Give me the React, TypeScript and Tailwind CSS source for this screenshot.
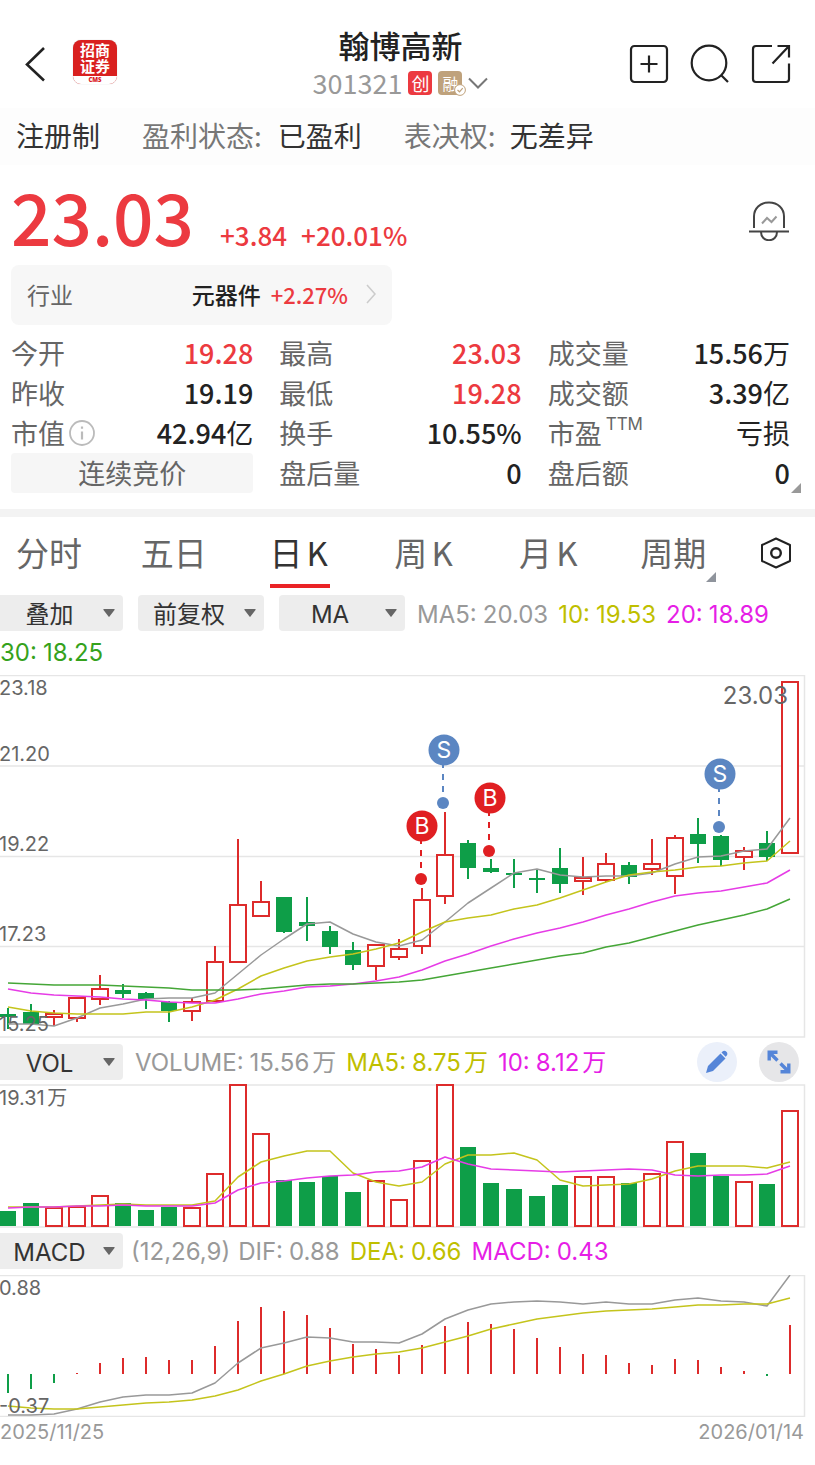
import { useState } from 'react';
import clsx from 'clsx';

const STEP = 23;
const FIRST = 8;
const cx = (i: number) => FIRST + i * STEP;

// [up, high, bodyTop, bodyBottom, low]
const candles: [number, number, number, number, number][] = [
    [0, 333, 339, 342, 354], [0, 329, 337, 349, 350], [1, 335, 339, 342, 351], [1, 323, 323, 343, 347],
    [1, 300, 314, 324, 330], [0, 309, 315, 319, 323], [0, 317, 318, 324, 334], [0, 326, 327, 336, 347],
    [1, 323, 327, 336, 346], [1, 271, 287, 326, 326], [1, 164, 230, 287, 287], [1, 206, 227, 241, 241],
    [0, 222, 222, 257, 258], [0, 222, 247, 251, 266], [0, 251, 256, 272, 279], [0, 267, 275, 290, 295],
    [1, 269, 270, 291, 305], [1, 264, 274, 282, 285], [1, 213, 225, 271, 279], [1, 137, 180, 221, 229],
    [0, 165, 168, 193, 204], [0, 184, 193, 197, 198], [0, 184, 198, 200, 213], [0, 194, 203, 205, 218],
    [0, 173, 193, 209, 218], [1, 182, 203, 206, 220], [1, 178, 189, 205, 207], [0, 187, 190, 202, 209],
    [1, 164, 189, 194, 200], [1, 160, 163, 201, 219], [0, 143, 159, 169, 188], [0, 160, 161, 185, 191],
    [1, 172, 176, 182, 195], [0, 156, 168, 182, 186], [1, 7, 7, 178, 178],
];

const ma5 = [349, 349, 351, 343, 333, 329, 324, 323, 323, 318, 299, 280, 264, 249, 247, 259, 267, 271, 265, 247, 228, 213, 198, 194, 200, 202, 201, 201, 198, 189, 182, 181, 176, 174, 143];
const ma10 = [332, 336, 338, 339, 339, 339, 337, 337, 332, 325, 314, 301, 293, 286, 282, 279, 274, 268, 257, 247, 243, 240, 234, 230, 223, 215, 207, 200, 197, 195, 192, 191, 188, 186, 166];
const ma20 = [314, 318, 320, 321, 322, 324, 325, 327, 328, 328, 324, 319, 316, 312, 311, 309, 306, 302, 295, 286, 279, 271, 264, 258, 253, 247, 240, 234, 227, 221, 218, 216, 212, 208, 195];
const ma30 = [308, 309, 310, 310, 310, 311, 312, 313, 315, 315, 315, 314, 312, 310, 309, 309, 308, 307, 305, 301, 297, 293, 289, 285, 281, 278, 272, 268, 262, 256, 250, 245, 240, 234, 224];

const volumes = [126, 118, 123, 122, 111, 118, 125, 122, 123, 89, 0, 49, 95, 97, 91, 107, 96, 115, 76, 0, 62, 98, 104, 111, 100, 92, 92, 98, 89, 57, 68, 91, 97, 99, 26];
const volMa5 = [122, 122, 122, 121, 120, 119, 120, 120, 120, 116, 92, 77, 71, 66, 66, 88, 97, 101, 97, 79, 70, 70, 68, 75, 95, 101, 100, 99, 94, 86, 81, 81, 81, 83, 77];
const volMa10 = [123, 122, 122, 121, 121, 120, 121, 121, 121, 118, 105, 98, 96, 93, 91, 90, 87, 86, 82, 72, 79, 84, 85, 86, 87, 86, 85, 84, 85, 90, 91, 90, 90, 89, 81];

const ZERO = 99;
const macd = [118, 114, 108, 98, 88, 83, 82, 85, 85, 71, 46, 32, 36, 40, 53, 69, 74, 80, 70, 51, 47, 49, 54, 63, 72, 79, 80, 88, 90, 84, 85, 92, 96, 101, 50];
const dif = [140, 140, 139, 134, 127, 122, 120, 120, 118, 108, 88, 73, 68, 62, 63, 67, 67, 68, 59, 44, 35, 29, 27, 26, 27, 29, 27, 29, 29, 25, 23, 26, 27, 31, 0];
const dea = [131, 133, 134, 134, 132, 130, 128, 127, 125, 121, 115, 106, 99, 91, 86, 82, 79, 77, 73, 67, 61, 54, 49, 44, 41, 38, 36, 35, 34, 32, 30, 30, 29, 29, 23];

const trades = [
    { type: 'B', x: 422, y: 151 },
    { type: 'S', x: 444, y: 75 },
    { type: 'B', x: 490, y: 123 },
    { type: 'S', x: 720, y: 99 },
];

const RED = '#dd2b2b';
const GREEN = '#0e9e48';

const quotes = [
    { label: '今开', value: '19.28', up: true },
    { label: '最高', value: '23.03', up: true },
    { label: '成交量', value: '15.56', unit: '万' },
    { label: '昨收', value: '19.19' },
    { label: '最低', value: '19.28', up: true },
    { label: '成交额', value: '3.39', unit: '亿' },
    { label: '市值', value: '42.94', unit: '亿', info: true },
    { label: '换手', value: '10.55%' },
    { label: '市盈', unit: '亏损', sup: 'TTM' },
    { label: '连续竞价', phase: true },
    { label: '盘后量', value: '0' },
    { label: '盘后额', value: '0' },
];

const tabs = ['分时', '五日', '日K', '周K', '月K', '周期'];

function Line({ data, color }: { data: number[]; color: string }) {
    return (
        <polyline
            points={data.map((y, i) => `${cx(i)},${y}`).join(' ')}
            fill="none"
            stroke={color}
            strokeWidth="1.5"
            strokeLinejoin="round"
        />
    );
}

function Bar({ i, up, top, bottom }: { i: number; up: boolean; top: number; bottom: number }) {
    return up ? (
        <rect x={cx(i) - 8} y={top} width="16" height={Math.max(bottom - top, 1)} fill="#fff" stroke={RED} strokeWidth="2" />
    ) : (
        <rect x={cx(i) - 8} y={top} width="16" height={bottom - top} fill={GREEN} />
    );
}

function AxisText({ y, children }: { y: number; children: string }) {
    return <text x="-1" y={y} fontSize="20" fill="#666">{children}</text>;
}

function Legend({ name, value, color }: { name: string; value: string; color: string }) {
    return (
        <span className={clsx('flex gap-1.5 whitespace-nowrap pt-0.5', color)}>
            <span>{name}:</span>
            <span>{value}</span>
        </span>
    );
}

function Picker({ label, value, first }: { label: string; value: string; first?: boolean }) {
    return (
        <div className="relative">
            <select
                aria-label={label}
                className={clsx(
                    'h-9 appearance-none bg-[#ededed] pr-6 pt-0.5 text-center text-2xl leading-9 text-[#333]',
                    first ? 'w-[123px] rounded-r' : 'w-[126px] rounded'
                )}
            >
                <option>{value}</option>
            </select>
            <svg className="pointer-events-none absolute right-2 top-3.5 h-2 w-3" viewBox="0 0 12 8">
                <path d="M1 0h10a.6.6 0 0 1 .5 1L6.5 7.6a.6.6 0 0 1-1 0L.5 1A.6.6 0 0 1 1 0z" fill="#666" />
            </svg>
        </div>
    );
}

function Header() {
    return (
        <header className="flex h-[108px] items-center justify-between pl-6 pr-6 pt-5">
            <div className="flex w-[148px] items-center gap-[27px]">
                <button aria-label="返回">
                    <svg className="h-10 w-[22px]" viewBox="0 0 22 40" fill="none" stroke="#222" strokeWidth="2.6">
                        <path d="M20 4L3 20.500l17 16" />
                    </svg>
                </button>
                <div className="mb-1 flex h-11 w-11 flex-col items-center overflow-hidden rounded-lg bg-[#d9201f] pt-0.5 text-[15px] font-bold leading-4 text-white shadow-[0_0_1px_#bbb]">
                    <span>招商</span>
                    <span>证券</span>
                    <span className="mt-0.5 w-full flex-1 rounded-t-[50%/2px] bg-white text-center font-['Open_Sans',sans-serif] text-[6px] font-extrabold leading-[8px] text-[#d9201f]">
                        CMS
                    </span>
                </div>
            </div>
            <div className="flex flex-col items-center">
                <h1 className="mb-1.5 text-[31px] font-medium leading-8 text-[#222]">翰博高新</h1>
                <div className="flex h-8 items-center gap-1.5">
                    <span className="text-[27px] leading-8 text-[#999]">301321</span>
                    <span className="flex h-6 w-6 items-center justify-center rounded bg-[#ec3a40] text-[18px] leading-6 text-white">创</span>
                    <span className="relative flex h-6 w-6 items-center justify-center rounded bg-[#bfa27c] text-[16px] leading-6 text-white">
                        融
                        <svg className="absolute -bottom-px -right-1 h-3 w-3" viewBox="0 0 12 12">
                            <circle cx="6" cy="6" r="5.400" fill="#fff" stroke="#bfa27c" />
                            <path d="M3.500 6l2 1.800 3.200-3.600" fill="none" stroke="#bfa27c" strokeWidth="1.200" />
                        </svg>
                    </span>
                    <button aria-label="切换股票">
                        <svg className="h-3 w-5" viewBox="0 0 20 12" fill="none" stroke="#777" strokeWidth="2">
                            <path d="M1 1.500l9 9 9-9" />
                        </svg>
                    </button>
                </div>
            </div>
            <div className="flex w-[162px] items-center justify-between text-[#222]">
                <button aria-label="添加自选">
                    <svg className="h-10 w-10" viewBox="0 0 40 40" fill="none" stroke="currentColor" strokeWidth="2.200">
                        <rect x="2" y="2" width="36" height="36" rx="3.500" />
                        <path d="M20 11.500v17M11.500 20h17" />
                    </svg>
                </button>
                <button aria-label="搜索">
                    <svg className="h-10 w-10" viewBox="0 0 40 40" fill="none" stroke="currentColor" strokeWidth="2.200">
                        <circle cx="19" cy="19" r="17.300" />
                        <path d="M31 31l7 7" />
                    </svg>
                </button>
                <button aria-label="分享">
                    <svg className="h-10 w-10" viewBox="0 0 40 40" fill="none" stroke="currentColor" strokeWidth="2.200">
                        <path d="M21 2H5a3 3 0 0 0-3 3v30a3 3 0 0 0 3 3h30a3 3 0 0 0 3-3V19.500" />
                        <path d="M26.500 2H38v11.500M38 2L21.500 19.500" />
                    </svg>
                </button>
            </div>
        </header>
    );
}

function Summary() {
    return (
        <section className="px-[11px]">
            <div className="flex h-[100px] items-end justify-between pb-3.5 pr-[15px]">
                <div className="flex items-baseline text-[#ec3a40]">
                    <span className="text-[71px] font-medium leading-none">23.03</span>
                    <span className="ml-[26px] text-[26px] font-medium leading-none">+3.84</span>
                    <span className="ml-3.5 text-[26px] font-medium leading-none">+20.01%</span>
                </div>
                <button aria-label="股价提醒" className="mb-2.5">
                    <svg className="h-10 w-10" viewBox="0 0 40 40" fill="none" stroke="#444" strokeWidth="2">
                        <path d="M5 27V15.500C5 7.500 11 1.500 20 1.500S35 7.500 35 15.500V27" />
                        <path d="M0 30.500h40M12 31c0 5 3.500 8.200 8 8.200s8-3.200 8-8.200" />
                        <path d="M13 22.500l5-5.500 4.500 4 5-5.500" stroke="#999" />
                    </svg>
                </button>
            </div>
            <a href="#industry" className="flex h-[60px] w-[381px] items-center rounded-lg bg-[#f7f7f7] px-4 pb-0.5 text-[23px]">
                <span className="text-[#666]">行业</span>
                <span className="ml-auto font-medium text-[#222]">元器件</span>
                <span className="ml-2.5 text-[22px] font-medium text-[#ec3a40]">+2.27%</span>
                <svg className="ml-[18px] h-5 w-2.5" viewBox="0 0 10 20" fill="none" stroke="#ccc" strokeWidth="1.600">
                    <path d="M1 1l8 9-8 9" />
                </svg>
            </a>
        </section>
    );
}

function Quotes() {
    return (
        <section className="relative grid grid-cols-3 gap-x-[26px] border-b-8 border-[#f3f3f3] pb-4 pl-[11px] pr-[25px] pt-2 text-[27px]">
            {quotes.map((q) =>
                q.phase ? (
                    <div key={q.label} className="h-10 rounded bg-[#f6f6f6] text-center leading-10 text-[#666]">{q.label}</div>
                ) : (
                    <div key={q.label} className="flex h-10 items-center justify-between leading-10">
                        <span className="flex items-center text-[#666]">
                            {q.label}
                            {q.info && (
                                <svg className="ml-1 h-[26px] w-[26px]" viewBox="0 0 26 26" fill="none" stroke="#bbb" strokeWidth="1.800">
                                    <circle cx="13" cy="13" r="12" />
                                    <path d="M13 11.500v8M13 6.500v2.200" strokeWidth="2.200" />
                                </svg>
                            )}
                            {q.sup && <sup className="ml-1 font-['Inter',sans-serif] text-[17px] leading-none text-[#666]">{q.sup}</sup>}
                        </span>
                        <span className={clsx('font-medium', q.up ? 'text-[#ec3a40]' : 'text-[#222]')}>
                            {q.value}
                            {q.unit && <span className="font-normal">{q.unit}</span>}
                        </span>
                    </div>
                )
            )}
            <svg className="absolute bottom-4 right-3.5 h-2.5 w-2.5" viewBox="0 0 10 10">
                <path d="M10 0v10H0z" fill="#999" />
            </svg>
        </section>
    );
}

function PriceChart() {
    return (
        <svg className="block h-auto w-full" viewBox="0 0 815 363" fontFamily="Inter, 'Noto Sans CJK SC', sans-serif">
            <path d="M0 .5H804.500V362H0M0 91H804M0 181.500H804M0 271.500H804" fill="none" stroke="#e6e6e6" strokeWidth="1.500" />
            {candles.map(([up, high, top, bottom, low], i) => (
                <g key={i}>
                    <line x1={cx(i)} x2={cx(i)} y1={high} y2={low} stroke={up ? RED : GREEN} strokeWidth="2" />
                    <Bar i={i} up={up === 1} top={top} bottom={bottom} />
                </g>
            ))}
            <Line data={ma5} color="#999" />
            <Line data={ma10} color="#c4c41c" />
            <Line data={ma20} color="#e63ce6" />
            <Line data={ma30} color="#45a637" />
            <AxisText y={20}>23.18</AxisText>
            <AxisText y={86}>21.20</AxisText>
            <AxisText y={176}>19.22</AxisText>
            <AxisText y={266}>17.23</AxisText>
            <AxisText y={356}>15.25</AxisText>
            <text x="788" y="29" fontSize="24" fill="#666" textAnchor="end">23.03</text>
            {trades.map(({ type, x, y }) => {
                const color = type === 'B' ? '#e01f22' : '#5b86c2';
                return (
                    <g key={x}>
                        <line x1={x - 1} x2={x - 1} y1={y + 12} y2={y + 42} stroke={color} strokeWidth="2" strokeDasharray="6 6" />
                        <circle cx={x} cy={y} r="15.500" fill={color} />
                        <text x={x} y={y + 8} fontSize="23" fill="#fff" textAnchor="middle">{type}</text>
                        <circle cx={x - 1} cy={y + 53} r="6" fill={color} />
                    </g>
                );
            })}
        </svg>
    );
}

function VolumeChart() {
    return (
        <svg className="block h-auto w-full overflow-visible" viewBox="0 0 815 142" fontFamily="Inter, 'Noto Sans CJK SC', sans-serif">
            <path d="M0 0H804.500V142H0" fill="none" stroke="#e6e6e6" strokeWidth="1.500" />
            {volumes.map((top, i) => (
                <Bar key={i} i={i} up={candles[i][0] === 1} top={top} bottom={141} />
            ))}
            <Line data={volMa5} color="#c4c41c" />
            <Line data={volMa10} color="#e63ce6" />
            <AxisText y={20}>19.31万</AxisText>
        </svg>
    );
}

function MacdChart() {
    return (
        <svg className="block h-auto w-full" viewBox="0 0 815 142" fontFamily="Inter, 'Noto Sans CJK SC', sans-serif">
            <path d="M0 .5H804.500V141.500H0" fill="none" stroke="#e6e6e6" strokeWidth="1.500" />
            {macd.map((y, i) => (
                <line key={i} x1={cx(i)} x2={cx(i)} y1={ZERO} y2={y} stroke={y < ZERO ? RED : GREEN} strokeWidth="2" />
            ))}
            <Line data={dif} color="#999" />
            <Line data={dea} color="#c4c41c" />
            <AxisText y={20}>0.88</AxisText>
            <AxisText y={138}>-0.37</AxisText>
        </svg>
    );
}

export default function App() {
    const [active, setActive] = useState('日K');

    return (
        <main className="min-h-screen overflow-hidden bg-white font-['Noto_Sans_CJK_SC',sans-serif]">
            <Header />
            <div className="flex h-[57px] items-center bg-[#fdfdfd] px-4 pb-1 text-[28px] text-[#333]">
                <span>注册制</span>
                <span className="ml-[42px] text-[#777]">盈利状态:</span>
                <span className="ml-4">已盈利</span>
                <span className="ml-[42px] text-[#777]">表决权:</span>
                <span className="ml-3.5">无差异</span>
            </div>
            <Summary />
            <Quotes />

            <nav className="flex h-[71px] items-center justify-between pl-4 pr-6 [text-autospace:normal]">
                {tabs.map((tab) => (
                    <button
                        key={tab}
                        onClick={() => setActive(tab)}
                        className={clsx(
                            'relative flex h-[71px] w-[66px] items-center justify-center whitespace-nowrap text-[33px]',
                            active === tab ? 'text-[#333]' : 'text-[#666]'
                        )}
                    >
                        {tab}
                        {active === tab && <span className="absolute bottom-0 left-1 h-1 w-[60px] bg-[#ea2326]" />}
                        {tab === '周期' && (
                            <svg className="absolute -right-2.5 bottom-1.5 h-2.5 w-2.5" viewBox="0 0 10 10">
                                <path d="M10 0v10H0z" fill="#8f949c" />
                            </svg>
                        )}
                    </button>
                ))}
                <button aria-label="图表设置" className="-ml-1">
                    <svg className="h-8 w-[30px]" viewBox="0 0 30 32" fill="none" stroke="#222" strokeWidth="2" strokeLinejoin="round">
                        <path d="M15 1.500L29 8v16l-14 6.500L1 24V8z" />
                        <circle cx="15" cy="16" r="4.800" strokeWidth="2.400" />
                    </svg>
                </button>
            </nav>

            <div className="font-['Inter','Noto_Sans_CJK_SC',sans-serif] [text-autospace:normal]">
                <div className="flex flex-wrap items-center gap-x-2.5 pb-1 pt-[7px] text-2xl leading-9">
                    <div className="flex gap-[15px] pr-0.5">
                        <Picker label="叠加" value="叠加" first />
                        <Picker label="复权" value="前复权" />
                        <Picker label="主图指标" value="MA" />
                    </div>
                    <Legend name="MA5" value="20.03" color="text-[#999]" />
                    <Legend name="10" value="19.53" color="text-[#bfbf00]" />
                    <Legend name="20" value="18.89" color="text-[#e61ee6]" />
                    <Legend name="30" value="18.25" color="text-[#35a21c]" />
                </div>
                <PriceChart />

                <div className="flex h-[47px] items-center gap-2.5 pr-4 text-2xl">
                    <Picker label="副图指标一" value="VOL" first />
                    <Legend name="VOLUME" value="15.56万" color="text-[#999] ml-0.5" />
                    <Legend name="MA5" value="8.75万" color="text-[#bfbf00]" />
                    <Legend name="10" value="8.12万" color="text-[#e61ee6]" />
                    <button aria-label="画线" className="ml-auto flex h-10 w-10 items-center justify-center rounded-full bg-[#ebf0fa]">
                        <svg className="h-6 w-6" viewBox="0 0 24 24" fill="#5585d8">
                            <path d="M1 23l2-7L15.500 3.500l5 5L8 21z" />
                            <path d="M16.500 2.500l1-1c1.200-1 2.800-.8 3.900.2s1.400 2.700.2 4l-1 1z" />
                        </svg>
                    </button>
                    <button aria-label="全屏" className="ml-3 flex h-10 w-10 items-center justify-center rounded-full bg-[#e6e6e8]">
                        <svg className="h-6 w-6" viewBox="0 0 24 24" fill="none" stroke="#5585d8" strokeWidth="3.400">
                            <path d="M2.200 10.500V2.200h8.300M3 3l7.500 7.500M21.800 13.500v8.300h-8.300M21 21l-7.500-7.500" />
                        </svg>
                    </button>
                </div>
                <VolumeChart />

                <div className="flex h-12 items-center gap-2.5 text-2xl">
                    <Picker label="副图指标二" value="MACD" first />
                    <span className="-ml-0.5 flex items-center gap-2 text-[#999]">
                        <span className="pt-0.5">(12,26,9)</span>
                        <Legend name="DIF" value="0.88" color="text-[#999]" />
                    </span>
                    <Legend name="DEA" value="0.66" color="text-[#bfbf00]" />
                    <Legend name="MACD" value="0.43" color="text-[#e61ee6]" />
                </div>
                <MacdChart />
                <div className="flex justify-between pb-5 pr-[11px] pt-px text-xl leading-7 text-[#999]">
                    <time>2025/11/25</time>
                    <time>2026/01/14</time>
                </div>
            </div>
        </main>
    );
}
